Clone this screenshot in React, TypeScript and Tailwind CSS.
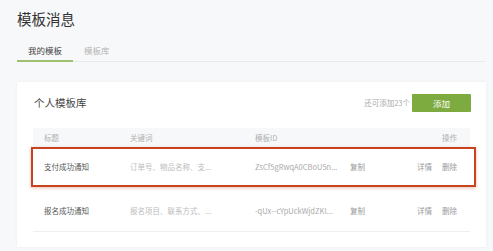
export default function App() {
  const font = { fontFamily: '"Noto Sans CJK SC", "Noto Sans", sans-serif' };
  const rows = [
    { title: "支付成功通知", kw: "订单号、物品名称、支...", id: "ZsCf5gRwqA0CBoU5n...", hl: true },
    { title: "报名成功通知", kw: "报名项目、联系方式、...", id: "-qUx--cYpUckWjdZKl...", hl: false },
  ];
  return (
    <div className="w-[493px] h-[251px] bg-[#f7f8fa] overflow-hidden" style={font}>
      <div className="pl-[17px] pr-[7px] pt-[9px]">
        <div className="text-[14.5px] leading-[20px] text-[#333]">模板消息</div>
        <div className="mt-[15px] flex border-b border-[#e9eaec] text-[8.5px] leading-[12px]">
          <div className="w-[56px] text-center pb-[4px] border-b-2 border-[#9fc06f] -mb-[1px] text-[#444]">我的模板</div>
          <div className="ml-[11px] pb-[4px] text-[#b5b5b5]">模板库</div>
        </div>
        <div className="mt-[20px] bg-white shadow-[0_0_3px_rgba(0,0,0,0.05)] w-[469px] h-[165px] px-[16px] pt-[12px]">
          <div className="flex items-center justify-between h-[18px]">
            <div className="pl-[1px] text-[10.5px] text-[#444] leading-[14px]">个人模板库</div>
            <div className="flex items-center -mr-[1px]">
              <span className="text-[7.5px] text-[#aaa] mr-[2px]">还可添加23个</span>
              <div className="w-[59px] h-[18px] bg-[#7dab3f] text-white text-[8.5px] flex items-center justify-center rounded-[1px]">添加</div>
            </div>
          </div>
          <div className="mt-[16px] h-[19px] bg-[#f7f8fa] flex items-center text-[7.5px] text-[#b0b0b0]">
            <div className="w-[97px] pl-[11px]">标题</div>
            <div className="w-[125px]">关键词</div>
            <div className="flex-1">模板ID</div>
            <div className="pr-[13px]">操作</div>
          </div>
          {rows.map((r) => (
            <div
              key={r.title}
              className={
                r.hl
                  ? "h-[40px] -ml-[2px] -mr-[6px] flex items-center text-[7.5px] border-2 border-[#c8431f] shadow-[0_1px_3px_rgba(200,67,31,0.35)]"
                  : "h-[45px] flex items-center text-[7.5px] border-b border-[#eeeff1] pt-[3px]"
              }
            >
              <div className="w-[97px] pl-[11px] text-[#555]">{r.title}</div>
              <div className="w-[125px] text-[#bbb]">{r.kw}</div>
              <div className="w-[95px] text-[#aaa] whitespace-nowrap overflow-hidden">{r.id}</div>
              <div className="flex-1 text-[#999]">复制</div>
              <div className={r.hl ? "flex gap-[10px] pr-[17px] text-[#999]" : "flex gap-[10px] pr-[13px] text-[#999]"}>
                <span>详情</span>
                <span>删除</span>
              </div>
            </div>
          ))}
        </div>
      </div>
    </div>
  );
}
